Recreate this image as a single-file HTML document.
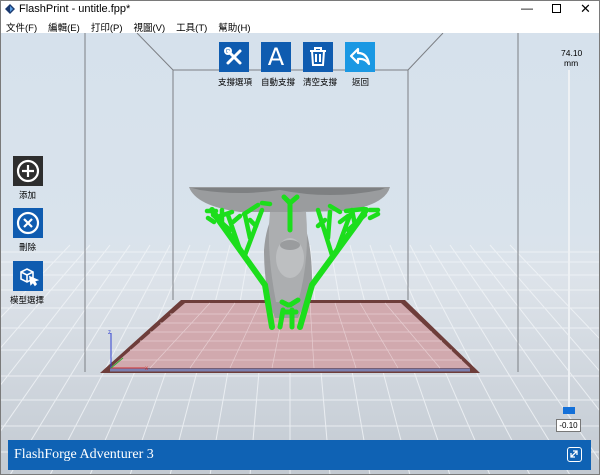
<!DOCTYPE html>
<html><head><meta charset="utf-8"><style>
*{margin:0;padding:0;box-sizing:border-box}
body{width:600px;height:475px;overflow:hidden;background:#fff;font-family:"Liberation Sans","Noto Sans CJK TC",sans-serif;position:relative}
.frame{position:absolute;left:0;top:0;width:600px;height:475px;border:1px solid #7a7a7a}
.title{position:absolute;left:0;top:0;width:600px;height:18px;font-size:11px;color:#000}
.menu{position:absolute;left:6px;top:20px;font-size:9.5px;color:#000;white-space:nowrap}
.menu span{margin-right:11px}
.vp{position:absolute;left:1px;top:33px;width:598px;height:441px;overflow:hidden}
.btn{position:absolute;width:30px;height:30px;background:#0f5cb0}
.lbl{position:absolute;font-size:8.5px;color:#000;white-space:nowrap}
.bar{position:absolute;left:8px;top:440px;width:583px;height:30px;background:#0f62b4;color:#fff;font-family:"Liberation Serif",serif;font-size:14px;line-height:30px;padding-left:6px}
</style></head><body>
<div class="vp">
<svg width="598" height="441" viewBox="1 33 598 441">
<defs>
<linearGradient id="bg" x1="0" y1="0" x2="0" y2="1">
<stop offset="0" stop-color="#d6e1ec"/><stop offset="0.45" stop-color="#d9e3ec"/><stop offset="0.55" stop-color="#dde3ea"/><stop offset="1" stop-color="#c3cad2"/></linearGradient>
</defs>
<rect x="1" y="33" width="598" height="441" fill="url(#bg)"/>
<g stroke="#f2f5f8" stroke-width="1" opacity="0.8">
<line x1="0" y1="252" x2="600" y2="252"/><line x1="0" y1="262" x2="600" y2="262"/><line x1="0" y1="275" x2="600" y2="275"/><line x1="0" y1="290" x2="600" y2="290"/><line x1="0" y1="308" x2="600" y2="308"/><line x1="0" y1="328" x2="600" y2="328"/><line x1="0" y1="350" x2="600" y2="350"/><line x1="0" y1="376" x2="600" y2="376"/><line x1="0" y1="400" x2="600" y2="400"/><line x1="0" y1="426" x2="600" y2="426"/><line x1="0" y1="452" x2="600" y2="452"/>
<line x1="290" y1="245" x2="290" y2="475"/><line x1="270" y1="245" x2="250" y2="475"/><line x1="250" y1="245" x2="210" y2="475"/><line x1="230" y1="245" x2="170" y2="475"/><line x1="210" y1="245" x2="130" y2="475"/><line x1="190" y1="245" x2="90" y2="475"/><line x1="170" y1="245" x2="50" y2="475"/><line x1="150" y1="245" x2="10" y2="475"/><line x1="130" y1="245" x2="-30" y2="475"/><line x1="110" y1="245" x2="-70" y2="475"/><line x1="90" y1="245" x2="-110" y2="475"/><line x1="70" y1="245" x2="-150" y2="475"/>
<line x1="310" y1="245" x2="330" y2="475"/><line x1="330" y1="245" x2="370" y2="475"/><line x1="350" y1="245" x2="410" y2="475"/><line x1="370" y1="245" x2="450" y2="475"/><line x1="390" y1="245" x2="490" y2="475"/><line x1="410" y1="245" x2="530" y2="475"/><line x1="430" y1="245" x2="570" y2="475"/><line x1="450" y1="245" x2="610" y2="475"/><line x1="470" y1="245" x2="650" y2="475"/><line x1="490" y1="245" x2="690" y2="475"/><line x1="510" y1="245" x2="730" y2="475"/>
</g>
<!-- box -->
<g stroke="#7c7f84" stroke-width="1" fill="none">
<line x1="85" y1="33" x2="85" y2="372"/><line x1="518" y1="33" x2="518" y2="372"/>
<line x1="137" y1="33" x2="173" y2="70"/><line x1="443" y1="33" x2="408" y2="70"/>
<polyline points="173,300 173,70 408,70 408,300"/>
</g>
<!-- bed -->
<polygon points="181,300 405,300 480,373 100,373" fill="#6e3d3a"/>
<polygon points="185,303 401,303 470,368 110,368" fill="#d1a9ae"/>
<line x1="110" y1="370" x2="470" y2="370" stroke="#7b7fb0" stroke-width="3"/>
<g stroke="#e6cdd1" stroke-width="0.7">
<line x1="120" y1="360" x2="462" y2="360"/><line x1="130" y1="350" x2="452" y2="350"/><line x1="140" y1="341" x2="442" y2="341"/><line x1="150" y1="332" x2="432" y2="332"/><line x1="160" y1="323" x2="422" y2="323"/><line x1="170" y1="314" x2="412" y2="314"/>
<line x1="210" y1="303" x2="150" y2="368"/><line x1="235" y1="303" x2="190" y2="368"/><line x1="260" y1="303" x2="230" y2="368"/><line x1="285" y1="303" x2="272" y2="368"/><line x1="310" y1="303" x2="314" y2="368"/><line x1="335" y1="303" x2="356" y2="368"/><line x1="360" y1="303" x2="398" y2="368"/><line x1="385" y1="303" x2="440" y2="368"/>
</g>
<!-- axes -->
<line x1="111" y1="368" x2="111" y2="333" stroke="#3040d0"/><line x1="111" y1="368" x2="145" y2="368" stroke="#d03030"/><line x1="111" y1="368" x2="123" y2="358" stroke="#30b030"/>
<text x="108" y="334" font-size="6" fill="#3040d0">z</text><text x="145" y="370" font-size="6" fill="#d03030">x</text>
<!-- model -->
<path d="M189,187 L390,187 Q385,205 345,211 L300,212 Q312,240 312,280 Q306,302 298,318 L275,318 Q264,290 264,250 Q266,225 275,212 L240,212 Q196,206 189,187Z" fill="#9a9c9e"/>
<path d="M200,190 Q240,196 280,190 Q330,200 380,190 L385,188 L192,188Z" fill="#7e8082"/>
<path d="M270,212 Q266,250 276,302 L298,302 Q310,260 306,212Z" fill="#acaeb0"/>
<ellipse cx="290" cy="258" rx="14" ry="20" fill="#bdbfc1"/>
<ellipse cx="290" cy="245" rx="10" ry="5" fill="#9a9c9e"/>
<g stroke="#1cde1c" stroke-linecap="round" fill="none">
<path d="M272,327 L265,285 L220,222 L212,210" stroke-width="6"/>
<path d="M300,327 L312,285 L358,222 L366,210" stroke-width="6"/>
<path d="M240,250 L228,215 M245,255 L262,210 M250,238 L245,215 M230,230 L213,215 M222,225 L222,210" stroke-width="4.5"/>
<path d="M337,250 L350,215 M332,255 L318,210 M328,238 L330,212 M348,230 L365,215 M355,225 L352,210" stroke-width="4.5"/>
<path d="M290,230 L290,203 M290,203 L284,197 M290,203 L297,197" stroke-width="5"/>
<path d="M280,327 L283,310 M292,327 L292,310 M285,312 L296,312 M288,305 L282,302 M290,305 L298,300" stroke-width="5"/>
<path d="M207,211 L216,211 M220,216 L232,212 M244,214 L258,205 M262,203 L270,204 M330,206 L340,212 M346,211 L364,209 M370,210 L378,210 M370,218 L378,214 M208,218 L214,222 M233,222 L240,216 M340,222 L348,216 M250,220 L256,226 M325,220 L318,226" stroke-width="4.5"/>
</g>
</svg>
</div>
<div class="frame"></div>
<div class="title"><svg style="position:absolute;left:5px;top:4px" width="10" height="10"><polygon points="5,0 10,5 5,10 0,5" fill="#1b3a70"/><polygon points="5,2 8,5 5,8" fill="#5aa0e6"/></svg><span style="position:absolute;left:19px;top:3px">FlashPrint - untitle.fpp*</span>
<span style="position:absolute;left:521px;top:1px;font-size:12px">—</span>
<span style="position:absolute;left:552px;top:4px;width:9px;height:9px;border:1px solid #000"></span>
<span style="position:absolute;left:580px;top:1px;font-size:13px">✕</span></div>
<div class="menu"><span>文件(F)</span><span>編輯(E)</span><span>打印(P)</span><span>視圖(V)</span><span>工具(T)</span><span>幫助(H)</span></div>
<!-- top toolbar -->
<div class="btn" style="left:219px;top:42px"><svg width="30" height="30"><g stroke="#fff" stroke-width="3" stroke-linecap="round"><line x1="9" y1="21" x2="21" y2="9"/><line x1="9" y1="9" x2="21" y2="21"/></g><circle cx="9" cy="9" r="3" fill="none" stroke="#fff" stroke-width="2"/></svg></div>
<div class="btn" style="left:261px;top:42px;color:#fff;font-size:24px;text-align:center;line-height:30px;font-family:'DejaVu Sans',sans-serif">A</div>
<div class="btn" style="left:303px;top:42px"><svg width="30" height="30" fill="none" stroke="#fff" stroke-width="2"><line x1="7" y1="9" x2="23" y2="9"/><path d="M12,9V6h6v3M9,9l1,14h10l1-14"/><line x1="13" y1="12" x2="13" y2="20"/><line x1="17" y1="12" x2="17" y2="20"/></svg></div>
<div class="btn" style="left:345px;top:42px;background:#1a98e3"><svg width="30" height="30" fill="none" stroke="#fff" stroke-width="2.2" stroke-linejoin="round"><path d="M6,14L13,7V11Q22,11 24,22Q20,16 13,17V21Z"/></svg></div>
<div class="lbl" style="left:218px;top:76px">支撐選項</div>
<div class="lbl" style="left:261px;top:76px">自動支撐</div>
<div class="lbl" style="left:303px;top:76px">清空支撐</div>
<div class="lbl" style="left:352px;top:76px">返回</div>
<!-- left toolbar -->
<div class="btn" style="left:13px;top:156px;background:#2e2e2e"><svg width="30" height="30" fill="none" stroke="#fff" stroke-width="2.2"><circle cx="15" cy="15" r="10"/><line x1="15" y1="9" x2="15" y2="21"/><line x1="9" y1="15" x2="21" y2="15"/></svg></div>
<div class="lbl" style="left:19px;top:189px">添加</div>
<div class="btn" style="left:13px;top:208px"><svg width="30" height="30" fill="none" stroke="#fff" stroke-width="2.2"><circle cx="15" cy="15" r="10"/><line x1="11" y1="11" x2="19" y2="19"/><line x1="19" y1="11" x2="11" y2="19"/></svg></div>
<div class="lbl" style="left:19px;top:241px">刪除</div>
<div class="btn" style="left:13px;top:261px"><svg width="30" height="30" fill="none" stroke="#fff" stroke-width="1.6"><path d="M8,11L14,8L20,11V18L14,21L8,18Z M8,11L14,14L20,11 M14,14V21"/><path d="M17,16L24,19L21,20L23,23L22,24L20,21L18,23Z" fill="#fff"/></svg></div>
<div class="lbl" style="left:10px;top:294px">模型選擇</div>
<!-- slider -->
<div class="lbl" style="left:561px;top:48px">74.10</div>
<div class="lbl" style="left:564px;top:58px">mm</div>
<div style="position:absolute;left:568px;top:70px;width:2px;height:337px;background:#eef1f4"></div>
<div style="position:absolute;left:563px;top:407px;width:12px;height:7px;background:#1470d8"></div>
<div style="position:absolute;left:556px;top:419px;width:25px;height:13px;background:#fff;border:1px solid #777;font-size:8px;text-align:center;line-height:11px">-0.10</div>
<div class="bar">FlashForge Adventurer 3<div style="position:absolute;right:9px;top:7px;width:15px;height:15px;border:1.5px solid #fff;border-radius:3px"><svg width="12" height="12" style="position:absolute;left:0;top:0" fill="none" stroke="#fff" stroke-width="1.3"><path d="M3,9L9,3M5,3h4v4M3,5v4h4"/></svg></div></div>
</body></html>
